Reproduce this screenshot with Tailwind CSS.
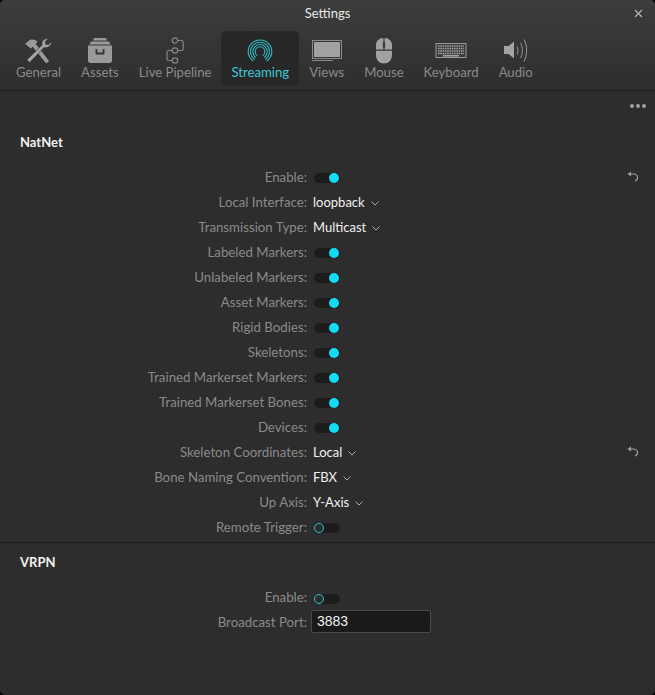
<!DOCTYPE html>
<html lang="en">
<head>
<meta charset="UTF-8">
<title>Settings</title>
<script src="https://cdn.jsdelivr.net/npm/@tailwindcss/browser@4"></script>
</head>
<body class="bg-black">
<div class="w-[655px] h-[695px] rounded-[5px] overflow-hidden bg-[#2d2d2d] font-['Lato','Liberation_Sans',sans-serif] text-[13.25px] text-[#8a8a8a] flex flex-col">

  <!-- title + tabs -->
  <div class="h-[91px] bg-gradient-to-b from-[#3d3d3d] to-[#2e2e2e] border-b border-[#1f1f1f] flex flex-col shrink-0">
    <div class="h-[31px] relative flex items-center justify-center pb-[4px] text-[13px] text-[#e8e8e8]">
      Settings
      <svg class="absolute right-[12px] top-[9px]" width="9" height="9" viewBox="0 0 9 9"><path d="M1 1l7 7M8 1l-7 7" stroke="#b5b5b5" stroke-width="1.1"/></svg>
    </div>
    <div class="flex pl-[6px] h-[54px] text-[13.17px]">
      <div class="px-[10px] flex flex-col items-center">
        <svg class="mt-[7px]" width="29" height="26" viewBox="0 0 30 27" fill="none">
          <path d="M1 6l5-4c3-1 6 0 8 2l-2 2 14 18-3 2.500L9 9l-2 2z" fill="#9a9a9a"/>
          <path d="M28.500 4l-3.500 3-2.500-.5L22 4l3-3c-3-.8-6 1-6.500 4 0 1 .2 1.800.4 2.300L3 22.500 5.800 25.500 20.500 10c3.600 1 8.400-2 8-6z" fill="#a4a4a4" stroke="#333" stroke-width=".6"/>
        </svg>
        <div class="leading-[16px]">General</div>
      </div>
      <div class="px-[10px] flex flex-col items-center">
        <svg class="mt-[6px]" width="26" height="27" viewBox="0 0 26 27" fill="#9a9a9a">
          <path d="M7 1h12l1 2.500H6zM4 4.500h18l1.500 3h-21z"/>
          <path fill-rule="evenodd" d="M1 8.500h24v15c0 1.500-1 2.500-2.500 2.500h-19C2 26 1 25 1 23.500zM8.500 12v4c0 1 .5 1.500 1.500 1.500h6c1 0 1.500-.5 1.500-1.500v-4h-1.800v3.500H10.300V12z"/>
        </svg>
        <div class="leading-[16px]">Assets</div>
      </div>
      <div class="px-[10px] flex flex-col items-center">
        <svg class="mt-[6px]" width="26" height="27" viewBox="0 0 26 27" fill="none" stroke="#858585" stroke-width="1.200">
          <circle cx="13" cy="3.500" r="2.700"/><circle cx="13" cy="13.500" r="2.700"/><circle cx="13" cy="23.500" r="2.700"/>
          <path d="M15.700 3.500h4c1 0 1.500.5 1.500 1.500v7c0 1-.5 1.500-1.500 1.500h-4M10.300 13.500H6.500c-1 0-1.500.5-1.500 1.500v7c0 1 .5 1.500 1.500 1.500h3.800"/>
        </svg>
        <div class="leading-[16px]">Live Pipeline</div>
      </div>
      <div class="px-[10px] flex flex-col items-center bg-[#272727] rounded-[5px]">
        <svg class="mt-[6px]" width="26" height="27" viewBox="0 0 26 27" fill="none" stroke="#2fb6c2" stroke-width="1.100">
          <path d="M6.500 24C3 21.800 1.200 18 1.200 14.500 1.200 8 6.500 3 13 3s11.800 5 11.800 11.500c0 3.500-1.800 7.300-5.300 9.500"/>
          <path d="M7.800 22.300C5 20.500 3.500 17.500 3.500 14.500c0-5.200 4.300-9.300 9.500-9.300s9.500 4.100 9.500 9.300c0 3-1.500 6-4.300 7.800"/>
          <path d="M9 20.500c-2-1.300-3.200-3.600-3.200-6 0-3.900 3.300-7 7.200-7s7.200 3.100 7.200 7c0 2.400-1.200 4.700-3.200 6"/>
          <path d="M10.200 18.700c-1.300-1-2.100-2.600-2.100-4.200 0-2.600 2.200-4.800 4.900-4.800s4.900 2.200 4.900 4.800c0 1.600-.8 3.200-2.100 4.200"/>
        </svg>
        <div class="leading-[16px] text-[#3ec8d4]">Streaming</div>
      </div>
      <div class="px-[10px] flex flex-col items-center">
        <svg class="mt-[6px]" width="32" height="27" viewBox="0 0 32 27">
          <rect x="1.500" y="3.500" width="29" height="18" fill="none" stroke="#8c8c8c"/>
          <rect x="3" y="5" width="26" height="15" fill="#a2a2a2"/>
          <path d="M1 23.500h21" stroke="#8c8c8c" stroke-width="1"/>
        </svg>
        <div class="leading-[16px]">Views</div>
      </div>
      <div class="px-[10px] flex flex-col items-center">
        <svg class="mt-[6px]" width="20" height="27" viewBox="0 0 20 27" fill="#a2a2a2">
          <path d="M9.400 1C5 1.200 2 4 2 8v4.500h7.400zM10.600 1C15 1.200 18 4 18 8v4.500h-7.400zM2 13.700h16V18c0 5-3.500 8.500-8 8.500S2 23 2 18z"/>
          <rect x="8.800" y="5" width="2.400" height="6" rx="1.200" fill="#3a3a3a"/>
        </svg>
        <div class="leading-[16px]">Mouse</div>
      </div>
      <div class="px-[10px] flex flex-col items-center">
        <svg class="mt-[6px]" width="32" height="27" viewBox="0 0 32 27" fill="none">
          <rect x="1" y="6.500" width="30" height="14" fill="#3a3a3a" stroke="#9a9a9a"/>
          <path d="M3 9h26M3 11.500h26M3 14h26" stroke="#a8a8a8" stroke-width="1.500" stroke-dasharray="1.500 .8"/>
          <path d="M3 16.500h26" stroke="#a8a8a8" stroke-width="1.500" stroke-dasharray="1.500 .8"/>
          <path d="M8 18.800h16" stroke="#a8a8a8" stroke-width="1.500"/>
        </svg>
        <div class="leading-[16px]">Keyboard</div>
      </div>
      <div class="px-[10px] flex flex-col items-center">
        <svg class="mt-[6px]" width="30" height="27" viewBox="0 0 30 27" fill="none" stroke="#9a9a9a" stroke-width="1">
          <path d="M3 9h4.500L13 4.500v17L7.500 17H3z" fill="#a2a2a2" stroke="none"/>
          <path d="M16 9.500c1.300 2.500 1.300 5.500 0 8M19.500 6c2.500 4 2.500 11 0 15M23 2.500c3.500 6 3.500 16 0 22"/>
        </svg>
        <div class="leading-[16px]">Audio</div>
      </div>
    </div>
  </div>

  <!-- more -->
  <div class="h-[34px] flex justify-end items-start pt-[13px] pr-[9px] gap-[2px] shrink-0">
    <span class="w-[4px] h-[4px] rounded-full bg-[#a0a0a0]"></span>
    <span class="w-[4px] h-[4px] rounded-full bg-[#a0a0a0]"></span>
    <span class="w-[4px] h-[4px] rounded-full bg-[#a0a0a0]"></span>
  </div>

  <!-- NatNet -->
  <div class="h-[39px] pl-[20px] pt-[8px] leading-[18px] font-bold text-[#f0f0f0] text-[13px] shrink-0">NatNet</div>
  <div class="flex flex-col">
    <div class="h-[25px] pt-[2px] flex items-center relative">
      <div class="w-[307px] text-right">Enable:</div>
      <div class="ml-[7px] relative w-[26px] h-[10px] rounded-full bg-[#1c1c1c]"><span class="absolute right-[1px] top-[0px] w-[10px] h-[10px] rounded-full bg-[#12dcf4]"></span></div>
      <svg class="absolute left-[626px] top-[6px]" width="13" height="13" viewBox="0 0 13 13" fill="none" stroke="#a0a0a0" stroke-width="1.200"><path d="M1.500 4 5 1.500v5z" fill="#a0a0a0" stroke="none"/><path d="M4 4h3.500c2 0 4 1.300 4 3.500 0 2-1 3-2.500 3.500"/></svg>
    </div>
    <div class="h-[25px] pt-[2px] flex items-center">
      <div class="w-[307px] text-right">Local Interface:</div>
      <div class="ml-[6px] text-[13px] text-[#f0f0f0]">loopback</div>
      <svg class="ml-[6px] mt-[2px]" width="8" height="5" viewBox="0 0 8 5" fill="none" stroke="#a8a8a8"><path d="M.5.500 4 4 7.500.5"/></svg>
    </div>
    <div class="h-[25px] pt-[2px] flex items-center">
      <div class="w-[307px] text-right">Transmission Type:</div>
      <div class="ml-[6px] text-[13px] text-[#f0f0f0]">Multicast</div>
      <svg class="ml-[6px] mt-[2px]" width="8" height="5" viewBox="0 0 8 5" fill="none" stroke="#a8a8a8"><path d="M.5.500 4 4 7.500.5"/></svg>
    </div>
    <div class="h-[25px] pt-[2px] flex items-center">
      <div class="w-[307px] text-right">Labeled Markers:</div>
      <div class="ml-[7px] relative w-[26px] h-[10px] rounded-full bg-[#1c1c1c]"><span class="absolute right-[1px] top-[0px] w-[10px] h-[10px] rounded-full bg-[#12dcf4]"></span></div>
    </div>
    <div class="h-[25px] pt-[2px] flex items-center">
      <div class="w-[307px] text-right">Unlabeled Markers:</div>
      <div class="ml-[7px] relative w-[26px] h-[10px] rounded-full bg-[#1c1c1c]"><span class="absolute right-[1px] top-[0px] w-[10px] h-[10px] rounded-full bg-[#12dcf4]"></span></div>
    </div>
    <div class="h-[25px] pt-[2px] flex items-center">
      <div class="w-[307px] text-right">Asset Markers:</div>
      <div class="ml-[7px] relative w-[26px] h-[10px] rounded-full bg-[#1c1c1c]"><span class="absolute right-[1px] top-[0px] w-[10px] h-[10px] rounded-full bg-[#12dcf4]"></span></div>
    </div>
    <div class="h-[25px] pt-[2px] flex items-center">
      <div class="w-[307px] text-right">Rigid Bodies:</div>
      <div class="ml-[7px] relative w-[26px] h-[10px] rounded-full bg-[#1c1c1c]"><span class="absolute right-[1px] top-[0px] w-[10px] h-[10px] rounded-full bg-[#12dcf4]"></span></div>
    </div>
    <div class="h-[25px] pt-[2px] flex items-center">
      <div class="w-[307px] text-right">Skeletons:</div>
      <div class="ml-[7px] relative w-[26px] h-[10px] rounded-full bg-[#1c1c1c]"><span class="absolute right-[1px] top-[0px] w-[10px] h-[10px] rounded-full bg-[#12dcf4]"></span></div>
    </div>
    <div class="h-[25px] pt-[2px] flex items-center">
      <div class="w-[307px] text-right">Trained Markerset Markers:</div>
      <div class="ml-[7px] relative w-[26px] h-[10px] rounded-full bg-[#1c1c1c]"><span class="absolute right-[1px] top-[0px] w-[10px] h-[10px] rounded-full bg-[#12dcf4]"></span></div>
    </div>
    <div class="h-[25px] pt-[2px] flex items-center">
      <div class="w-[307px] text-right">Trained Markerset Bones:</div>
      <div class="ml-[7px] relative w-[26px] h-[10px] rounded-full bg-[#1c1c1c]"><span class="absolute right-[1px] top-[0px] w-[10px] h-[10px] rounded-full bg-[#12dcf4]"></span></div>
    </div>
    <div class="h-[25px] pt-[2px] flex items-center">
      <div class="w-[307px] text-right">Devices:</div>
      <div class="ml-[7px] relative w-[26px] h-[10px] rounded-full bg-[#1c1c1c]"><span class="absolute right-[1px] top-[0px] w-[10px] h-[10px] rounded-full bg-[#12dcf4]"></span></div>
    </div>
    <div class="h-[25px] pt-[2px] flex items-center relative">
      <div class="w-[307px] text-right">Skeleton Coordinates:</div>
      <div class="ml-[6px] text-[13px] text-[#f0f0f0]">Local</div>
      <svg class="ml-[6px] mt-[2px]" width="8" height="5" viewBox="0 0 8 5" fill="none" stroke="#a8a8a8"><path d="M.5.500 4 4 7.500.5"/></svg>
      <svg class="absolute left-[626px] top-[6px]" width="13" height="13" viewBox="0 0 13 13" fill="none" stroke="#a0a0a0" stroke-width="1.200"><path d="M1.500 4 5 1.500v5z" fill="#a0a0a0" stroke="none"/><path d="M4 4h3.500c2 0 4 1.300 4 3.500 0 2-1 3-2.500 3.500"/></svg>
    </div>
    <div class="h-[25px] pt-[2px] flex items-center">
      <div class="w-[307px] text-right">Bone Naming Convention:</div>
      <div class="ml-[6px] text-[13px] text-[#f0f0f0]">FBX</div>
      <svg class="ml-[6px] mt-[2px]" width="8" height="5" viewBox="0 0 8 5" fill="none" stroke="#a8a8a8"><path d="M.5.500 4 4 7.500.5"/></svg>
    </div>
    <div class="h-[25px] pt-[2px] flex items-center">
      <div class="w-[307px] text-right">Up Axis:</div>
      <div class="ml-[6px] text-[13px] text-[#f0f0f0]">Y-Axis</div>
      <svg class="ml-[6px] mt-[2px]" width="8" height="5" viewBox="0 0 8 5" fill="none" stroke="#a8a8a8"><path d="M.5.500 4 4 7.500.5"/></svg>
    </div>
    <div class="h-[25px] pt-[2px] flex items-center">
      <div class="w-[307px] text-right">Remote Trigger:</div>
      <div class="ml-[7px] relative w-[26px] h-[10px] rounded-full bg-[#1c1c1c]"><span class="absolute left-0 top-0 w-[10px] h-[10px] rounded-full border border-[#2bc3d2] bg-[#2d2d2d]"></span></div>
    </div>
  </div>

  <!-- VRPN -->
  <div class="mt-[3px] border-t border-[#1c1c1c] h-[42px] pl-[20px] pt-[10px] leading-[18px] font-bold text-[#f0f0f0] text-[13px] shrink-0">VRPN</div>
  <div class="flex flex-col">
    <div class="h-[25px] pt-[2px] flex items-center">
      <div class="w-[307px] text-right">Enable:</div>
      <div class="ml-[7px] mt-[2px] relative w-[26px] h-[10px] rounded-full bg-[#1c1c1c]"><span class="absolute left-0 top-0 w-[10px] h-[10px] rounded-full border border-[#2bc3d2] bg-[#2d2d2d]"></span></div>
    </div>
    <div class="h-[25px] pt-[2px] flex items-center">
      <div class="w-[307px] text-right">Broadcast Port:</div>
      <div class="ml-[4px] mt-[-2px] w-[120px] h-[23px] rounded-[2px] bg-[#1a1a1a] border border-[#4a4a4a] pl-[5px] leading-[21px] text-[#f0f0f0] font-['Liberation_Sans',sans-serif] text-[14px]">3883</div>
    </div>
  </div>
</div>
</body>
</html>
